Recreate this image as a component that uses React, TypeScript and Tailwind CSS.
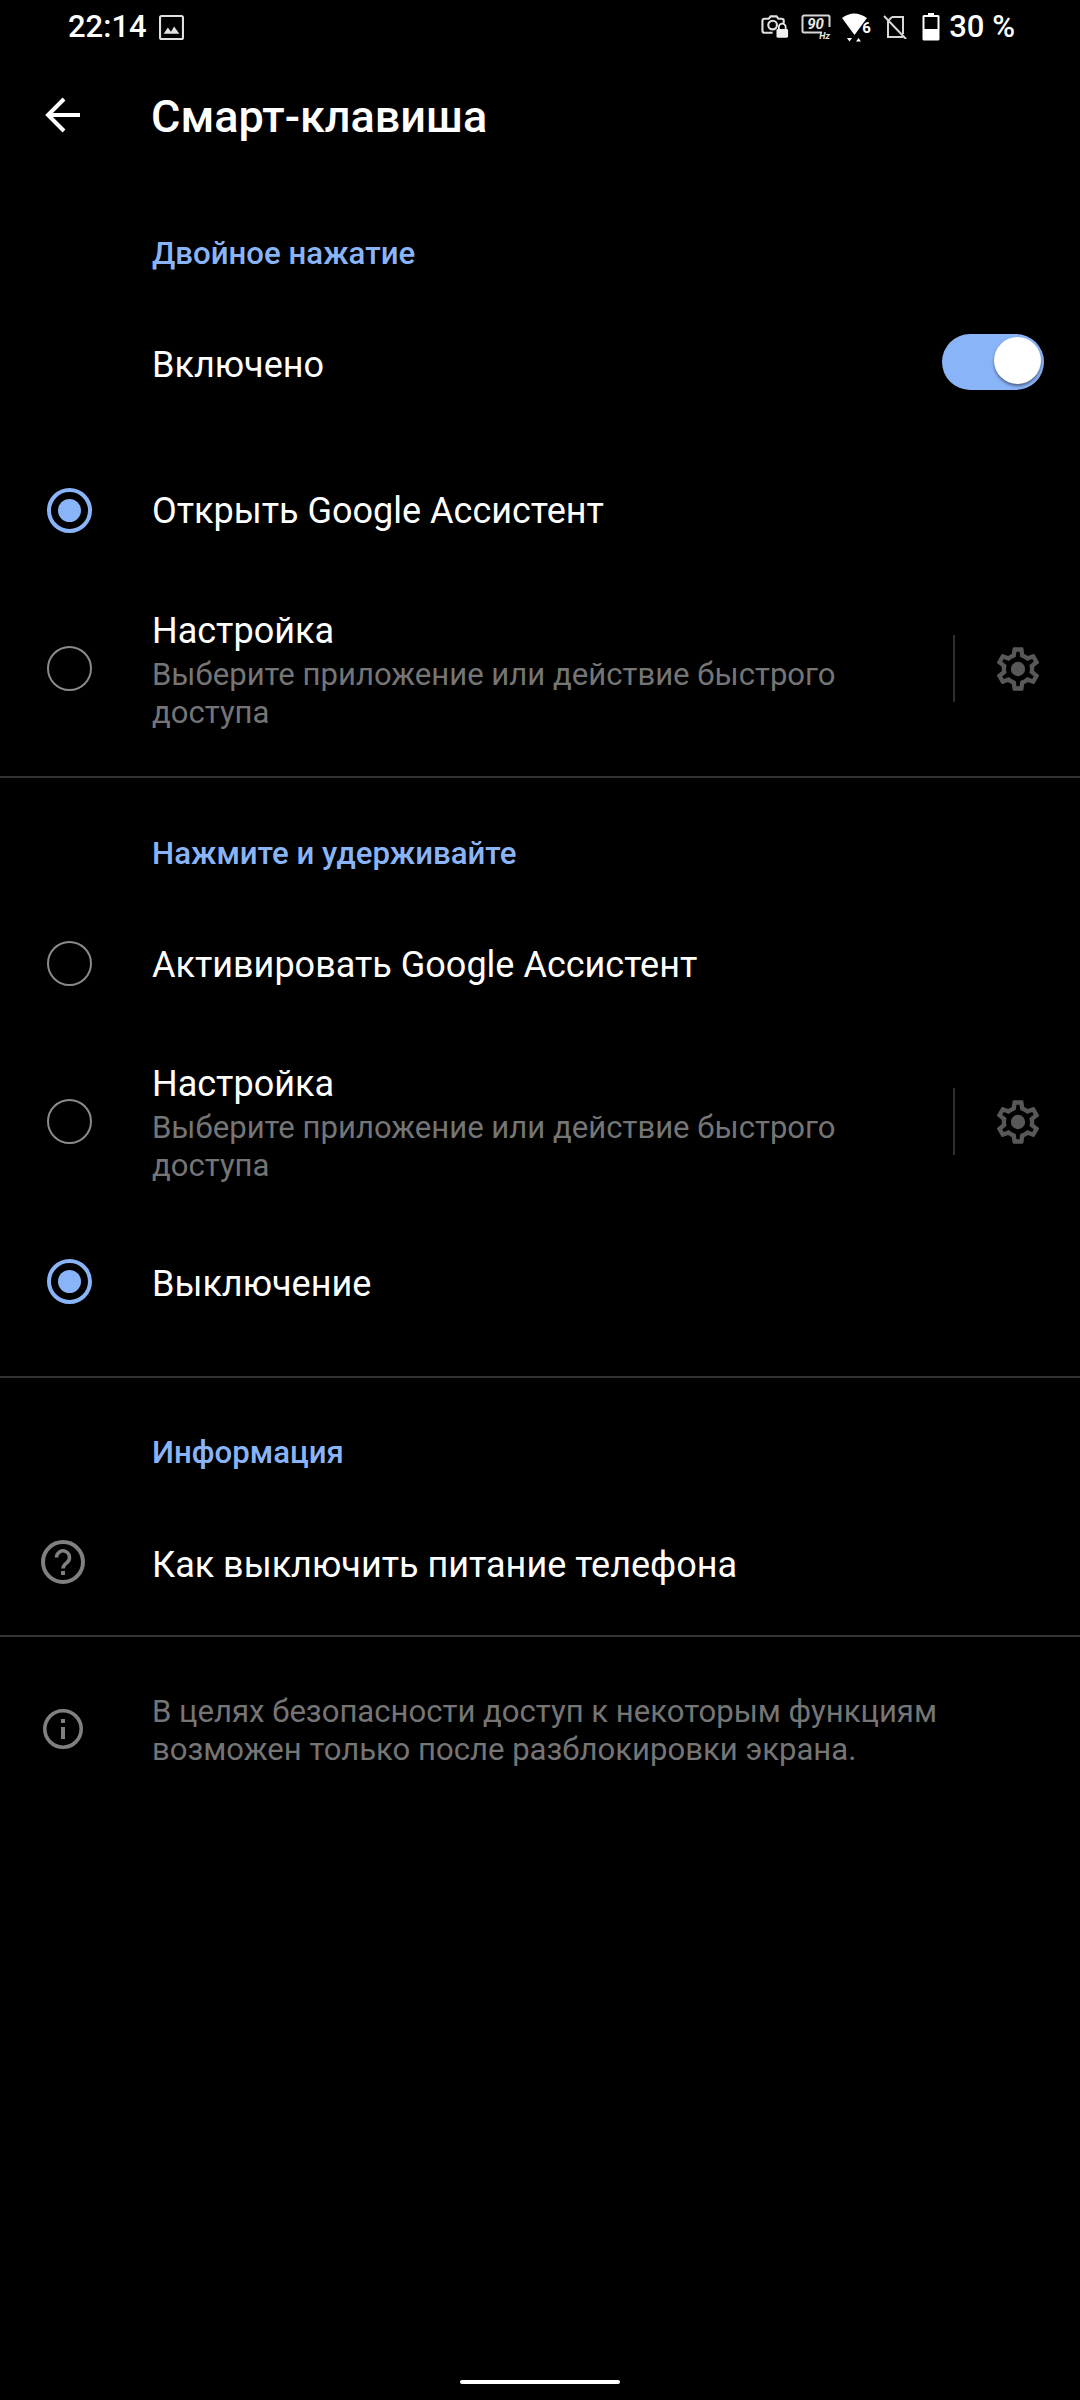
import React from "react";

const GEAR = "M19.43 12.98c.04-.32.07-.64.07-.98 0-.34-.03-.66-.07-.98l2.11-1.65c.19-.15.24-.42.12-.64l-2-3.46c-.09-.16-.26-.25-.44-.25-.06 0-.12.01-.17.03l-2.49 1c-.52-.4-1.08-.73-1.69-.98l-.38-2.65C14.46 2.18 14.25 2 14 2h-4c-.25 0-.46.18-.49.42l-.38 2.65c-.61.25-1.17.59-1.69.98l-2.49-1c-.06-.02-.12-.03-.18-.03-.17 0-.34.09-.43.25l-2 3.46c-.13.22-.07.49.12.64l2.11 1.65c-.04.32-.07.65-.07.98 0 .33.03.66.07.98l-2.11 1.65c-.19.15-.24.42-.12.64l2 3.46c.09.16.26.25.44.25.06 0 .12-.01.17-.03l2.49-1c.52.4 1.08.73 1.69.98l.38 2.65c.03.24.24.42.49.42h4c.25 0 .46-.18.49-.42l.38-2.65c.61-.25 1.17-.59 1.69-.98l2.49 1c.06.02.12.03.18.03.17 0 .34-.09.43-.25l2-3.46c.12-.22.07-.49-.12-.64l-2.11-1.65zm-1.98-1.71c.04.31.05.52.05.73 0 .21-.02.43-.05.73l-.14 1.13.89.7 1.08.84-.7 1.21-1.27-.51-1.04-.42-.9.68c-.43.32-.84.56-1.25.73l-1.06.43-.16 1.13-.2 1.35h-1.4l-.19-1.35-.16-1.13-1.06-.43c-.43-.18-.83-.41-1.23-.71l-.91-.7-1.06.43-1.27.51-.7-1.21 1.08-.84.89-.7-.14-1.13c-.03-.31-.05-.54-.05-.74s.02-.43.05-.73l.14-1.13-.89-.7-1.08-.84.7-1.21 1.27.51 1.04.42.9-.68c.43-.32.84-.56 1.25-.73l1.06-.43.16-1.13.2-1.35h1.39l.19 1.35.16 1.13 1.06.43c.43.18.83.41 1.23.71l.91.7 1.06-.43 1.27-.51.7 1.21-1.07.85-.89.7.14 1.13z";

function Radio({ on }: { on?: boolean }) {
  return on ? (
    <div className="w-[45px] h-[45px] shrink-0 rounded-full border-[4px] border-[#8ab4f8] flex items-center justify-center">
      <div className="w-[23px] h-[23px] rounded-full bg-[#8ab4f8]" />
    </div>
  ) : (
    <div className="w-[45px] h-[45px] shrink-0 rounded-full border-2 border-[#8a8a8a]" />
  );
}

function Header({ children, className }: { children: React.ReactNode; className: string }) {
  return (
    <div className={`pl-[152px] h-[56px] flex items-center text-[31.2px] font-medium text-[#8ab4f8] ${className}`}>
      <span className="translate-y-[2px]">{children}</span>
    </div>
  );
}

function RadioRow({ on, label, labelClass }: { on?: boolean; label: string; labelClass: string }) {
  return (
    <div className="h-[100px] pl-[47px] flex items-center gap-[60px] text-[36px] text-white">
      <Radio on={on} />
      <span className={labelClass}>{label}</span>
    </div>
  );
}

function CustomRow() {
  return (
    <div className="h-[216px] pl-[47px] flex items-center">
      <Radio />
      <div className="ml-[60px] w-[801px] shrink-0 relative top-[2px]">
        <div className="text-[36px] leading-[47px] text-white -translate-y-[1px]">Настройка</div>
        <div className="text-[31.1px] leading-[37.5px] text-[#757575] pr-[20px]">
          Выберите приложение или действие быстрого доступа
        </div>
      </div>
      <div className="w-[2px] h-[67px] bg-[#2e2e2e] shrink-0" />
      <svg viewBox="0 0 24 24" className="w-[52px] h-[52px] ml-[37px] shrink-0 translate-y-[1px]" fill="#585858">
        <path d={GEAR} />
        <circle cx="12" cy="12" r="3.3" />
      </svg>
    </div>
  );
}

function Divider() {
  return <div className="h-[2px] bg-[#333333]" />;
}

function StatusIcons() {
  return (
    <div className="flex items-center h-full">
      <svg width="29" height="26" viewBox="0 0 30 26" fill="none">
        <path d="M12 19H3.500A2 2 0 0 1 1.500 17V6.500a2 2 0 0 1 2-2H8l2-2.500h6l2 2.500h3.500a2 2 0 0 1 2 2V9" stroke="#e0e0e0" strokeWidth="2.200" />
        <circle cx="12" cy="11" r="4.500" stroke="#e0e0e0" strokeWidth="2.200" />
        <rect x="16" y="15" width="12" height="9" rx="1.500" fill="#f0f0f0" />
        <path d="M18.500 15v-2a3.500 3.500 0 0 1 7 0v2" stroke="#f0f0f0" strokeWidth="1.800" />
      </svg>
      <div className="relative w-[30px] h-[26px] ml-[11px]">
        <svg width="30" height="22" viewBox="0 0 30 22" fill="none" className="absolute left-0 top-0">
          <path d="M21 18.500H3a1.500 1.500 0 0 1-1.500-1.500V3A1.500 1.500 0 0 1 3 1.500h24A1.500 1.500 0 0 1 28.500 3v10" stroke="#d8d8d8" strokeWidth="2" />
        </svg>
        <span className="absolute left-[6px] top-[2px] text-[15px] leading-[16px] font-bold italic text-[#e8e8e8]">90</span>
        <span className="absolute left-[18px] top-[17px] text-[9px] leading-[10px] font-bold italic text-[#e8e8e8]">Hz</span>
      </div>
      <div className="relative w-[30px] h-[30px] ml-[11px]">
        <svg width="30" height="30" viewBox="0 0 30 30" className="absolute left-0 top-0" fill="#ffffff">
          <path d="M0 6Q12-3 25 6L12.500 23Z" />
          <path d="M5 26h5l-2.500 3.500Z" />
          <path d="M14 29.500h5l-2.500-3.500Z" />
        </svg>
        <span className="absolute left-[20px] top-[8px] text-[15px] leading-[16px] font-bold text-white">6</span>
      </div>
      <svg width="24" height="24" viewBox="0 0 24 24" fill="none" className="ml-[11px]" stroke="#d8d8d8" strokeWidth="2">
        <path d="M9 2h11v17M20 22H5V6" />
        <path d="M1 1l22 23" />
        <path d="M5 6l4-4" />
      </svg>
      <svg width="18" height="28" viewBox="0 0 18 28" className="ml-[15px]" fill="none">
        <path d="M6 0h6v2h4a1.500 1.500 0 0 1 1.500 1.500V26a1.500 1.500 0 0 1-1.500 1.500H2A1.500 1.500 0 0 1 .5 26V3.500A1.500 1.500 0 0 1 2 2h4Z" fill="#ffffff" />
        <rect x="2.500" y="4" width="13" height="12" fill="#000000" />
      </svg>
      <span className="ml-[9px] text-[31px] font-medium text-white">30 %</span>
    </div>
  );
}

export default function App() {
  return (
    <div className="w-[1080px] h-[2400px] bg-black text-white flex flex-col font-['Roboto','Noto_Sans',sans-serif] overflow-hidden">
      <div className="h-[54px] shrink-0 pl-[68px] pr-[65px] flex items-center justify-between">
        <div className="flex items-center">
          <span className="text-[31px] font-medium text-white">22:14</span>
          <svg width="25" height="25" viewBox="0 0 24 24" className="ml-[12px]" fill="none">
            <rect x="1" y="1" width="22" height="22" rx="1.500" stroke="#e0e0e0" strokeWidth="2" />
            <path d="M4.500 18l4-6 3 4 3-5 5 7Z" fill="#e0e0e0" />
          </svg>
        </div>
        <StatusIcons />
      </div>

      <div className="h-[126px] shrink-0 flex items-center pl-[45px]">
        <svg width="36" height="36" viewBox="0 0 36 36" fill="none" stroke="#ffffff" strokeWidth="4" className="-translate-y-[2px]">
          <path d="M35 18H3" />
          <path d="M19 2L3 18l16 16" />
        </svg>
        <span className="ml-[70px] text-[45px] font-medium text-white">Смарт-клавиша</span>
      </div>

      <Header className="mt-[44px]">Двойное нажатие</Header>
      <div className="h-[167px] pl-[152px] pr-[36px] flex items-center justify-between text-[36px] text-white">
        <span className="translate-y-[1px]">Включено</span>
        <div className="w-[102px] h-[56px] rounded-full bg-[#8ab4f8] flex items-center justify-end pr-[3px] -translate-y-[2px]">
          <div className="w-[47px] h-[47px] rounded-full bg-white shadow-[0_2px_3px_rgba(0,0,0,0.45)] -translate-y-[1px]" />
        </div>
      </div>
      <div className="pt-[13px]">
        <RadioRow on label="Открыть Google Ассистент" labelClass="translate-y-[1px]" />
        <CustomRow />
      </div>
      <Divider />

      <Header className="mt-[46px]">Нажмите и удерживайте</Header>
      <div className="pt-[33px]">
        <RadioRow label="Активировать Google Ассистент" labelClass="translate-y-[2px]" />
        <CustomRow />
        <div className="h-[105px] pl-[47px] flex items-center gap-[60px] text-[36px] text-white">
          <Radio on />
          <span className="translate-y-[2px]">Выключение</span>
        </div>
      </div>
      <div className="h-[42px]" />
      <Divider />

      <Header className="mt-[45px]">Информация</Header>
      <div className="mt-[12px] h-[144px] pl-[41px] flex items-center text-[36px] text-white">
        <svg width="44" height="44" viewBox="0 0 44 44" fill="none" className="-translate-y-[1px]">
          <circle cx="22" cy="22" r="20" stroke="#808080" strokeWidth="4" />
          <path d="M15.500 17.500a6.500 6.500 0 1 1 10.500 5c-2.500 2-4 3-4 6" stroke="#808080" strokeWidth="3.500" />
          <rect x="20" y="31" width="4" height="4" fill="#808080" />
        </svg>
        <span className="ml-[67px] translate-y-[2px]">Как выключить питание телефона</span>
      </div>
      <Divider />

      <div className="pl-[43px] mt-[56px] flex items-center">
        <svg width="40" height="40" viewBox="0 0 40 40" fill="none" className="-translate-y-[2px]">
          <circle cx="20" cy="20" r="18.200" stroke="#808080" strokeWidth="3.600" />
          <rect x="18" y="18" width="4" height="12" fill="#808080" />
          <rect x="18" y="10" width="4" height="4" fill="#808080" />
        </svg>
        <div className="ml-[69px] w-[800px] text-[31.1px] leading-[37.5px] text-[#757575]">
          В целях безопасности доступ к некоторым функциям возможен только после разблокировки экрана.
        </div>
      </div>

      <div className="mt-auto mb-[16px] self-center w-[160px] h-[4px] rounded-full bg-white" />
    </div>
  );
}
